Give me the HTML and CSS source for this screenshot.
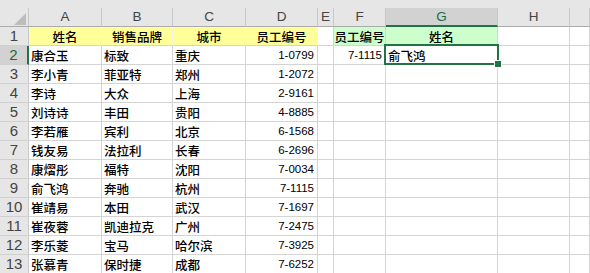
FILE: index.html
```html
<!DOCTYPE html>
<html lang="zh-CN">

<head>
    <meta charset="UTF-8">
    <meta name="viewport" content="width=device-width, initial-scale=1.0">
    <title>员工查找</title>
    <link rel="stylesheet" href="styles.css">
</head>

<body>
    <div class="topbar"></div>
    <div class="sheet">
        <!-- column headers -->
        <div class="ch corner"><span class="tri"></span></div>
        <div class="ch">A</div>
        <div class="ch">B</div>
        <div class="ch">C</div>
        <div class="ch">D</div>
        <div class="ch">E</div>
        <div class="ch">F</div>
        <div class="ch on">G</div>
        <div class="ch">H</div>
        <div class="ch"></div>

        <div class="rh">1</div>
        <div class="t mid yellow">姓名</div>
        <div class="t mid yellow">销售品牌</div>
        <div class="t mid yellow">城市</div>
        <div class="t mid yellow">员工编号</div>
        <div></div>
        <div class="t mid green">员工编号</div>
        <div class="t mid green">姓名</div>
        <div></div>
        <div></div>

        <div class="rh on">2</div>
        <div class="t">康合玉</div>
        <div class="t">标致</div>
        <div class="t">重庆</div>
        <div class="n">1-0799</div>
        <div></div>
        <div class="n">7-1115</div>
        <div class="t sel">俞飞鸿<span class="handle"></span></div>
        <div></div>
        <div></div>

        <div class="rh">3</div>
        <div class="t">李小青</div>
        <div class="t">菲亚特</div>
        <div class="t">郑州</div>
        <div class="n">1-2072</div>
        <div></div><div></div><div></div><div></div><div></div>

        <div class="rh">4</div>
        <div class="t">李诗</div>
        <div class="t">大众</div>
        <div class="t">上海</div>
        <div class="n">2-9161</div>
        <div></div><div></div><div></div><div></div><div></div>

        <div class="rh">5</div>
        <div class="t">刘诗诗</div>
        <div class="t">丰田</div>
        <div class="t">贵阳</div>
        <div class="n">4-8885</div>
        <div></div><div></div><div></div><div></div><div></div>

        <div class="rh">6</div>
        <div class="t">李若雁</div>
        <div class="t">宾利</div>
        <div class="t">北京</div>
        <div class="n">6-1568</div>
        <div></div><div></div><div></div><div></div><div></div>

        <div class="rh">7</div>
        <div class="t">钱友易</div>
        <div class="t">法拉利</div>
        <div class="t">长春</div>
        <div class="n">6-2696</div>
        <div></div><div></div><div></div><div></div><div></div>

        <div class="rh">8</div>
        <div class="t">康熠彤</div>
        <div class="t">福特</div>
        <div class="t">沈阳</div>
        <div class="n">7-0034</div>
        <div></div><div></div><div></div><div></div><div></div>

        <div class="rh">9</div>
        <div class="t">俞飞鸿</div>
        <div class="t">奔驰</div>
        <div class="t">杭州</div>
        <div class="n">7-1115</div>
        <div></div><div></div><div></div><div></div><div></div>

        <div class="rh">10</div>
        <div class="t">崔靖易</div>
        <div class="t">本田</div>
        <div class="t">武汉</div>
        <div class="n">7-1697</div>
        <div></div><div></div><div></div><div></div><div></div>

        <div class="rh">11</div>
        <div class="t">崔夜蓉</div>
        <div class="t">凯迪拉克</div>
        <div class="t">广州</div>
        <div class="n">7-2475</div>
        <div></div><div></div><div></div><div></div><div></div>

        <div class="rh">12</div>
        <div class="t">李乐菱</div>
        <div class="t">宝马</div>
        <div class="t">哈尔滨</div>
        <div class="n">7-3925</div>
        <div></div><div></div><div></div><div></div><div></div>

        <div class="rh">13</div>
        <div class="t">张慕青</div>
        <div class="t">保时捷</div>
        <div class="t">成都</div>
        <div class="n">7-6252</div>
        <div></div><div></div><div></div><div></div><div></div>
    </div>
</body>

</html>
```

FILE: styles.css
```css
body {
    margin: 0;
    height: 273px;
    overflow: hidden;
    background-color: #ffffff;
    font-family: "Liberation Sans", "Noto Sans CJK SC", sans-serif;
    color: #000000;
}

.topbar {
    height: 8px;
    background-color: #e6e6e6;
}

.sheet {
    display: grid;
    grid-template-columns: 29px 73px 71px 73px 72px 16px 52px 112px 72px 1fr;
    grid-auto-rows: 19px;
}

.sheet > div {
    box-sizing: border-box;
    border-right: 1px solid #d4d4d4;
    border-bottom: 1px solid #d4d4d4;
    line-height: 18px;
    white-space: nowrap;
    padding: 0 3px;
}

/* headers */
.sheet > .ch {
    background-color: #e6e6e6;
    border-right-color: #c8c8c8;
    border-bottom-color: #ababab;
    color: #444444;
    font-size: 13.5px;
    text-align: center;
    padding: 0;
}

.sheet > .ch.on {
    background-color: #d2d2d2;
    border-bottom: 2px solid #217346;
    color: #1d6b40;
}

.sheet > .corner {
    display: flex;
    justify-content: flex-end;
    align-items: flex-end;
    padding: 0 2px 1px 0;
}

.tri {
    width: 12px;
    height: 12px;
    background-color: #bdbdbd;
    clip-path: polygon(100% 0, 100% 100%, 0 100%);
}

.sheet > .rh {
    background-color: #e6e6e6;
    border-right-color: #c8c8c8;
    border-bottom-color: #d0d0d0;
    color: #444444;
    font-family: "Liberation Sans Narrow", "Liberation Sans", sans-serif;
    font-size: 15px;
    text-align: center;
    padding: 0;
}

.sheet > .rh.on {
    background-color: #d2d2d2;
    border-right: 2px solid #217346;
    color: #1d6b40;
}

/* cells */
.sheet > .t {
    font-family: "Noto Sans CJK SC", sans-serif;
    font-size: 12.5px;
    font-weight: 500;
    padding-left: 2px;
    padding-top: 1px;
    line-height: 17px;
}

.sheet > .n {
    font-size: 11.5px;
    text-align: right;
    padding-right: 3px;
    padding-top: 1px;
    line-height: 17px;
}

.sheet > .mid {
    text-align: center;
    padding: 1px 0 0 0;
}

.sheet > .yellow {
    background-color: #ffff99;
    border-right-color: #f4f4e4;
}

.sheet > .green {
    background-color: #ccffcc;
}

/* selected cell */
.sel {
    position: relative;
}

.sel::after {
    content: "";
    position: absolute;
    left: -2px;
    top: -2px;
    right: -2px;
    bottom: -1px;
    border: 2px solid #217346;
}

.handle {
    position: absolute;
    right: -4px;
    bottom: -3px;
    width: 6px;
    height: 6px;
    background-color: #217346;
    outline: 1px solid #ffffff;
    z-index: 1;
}
```
